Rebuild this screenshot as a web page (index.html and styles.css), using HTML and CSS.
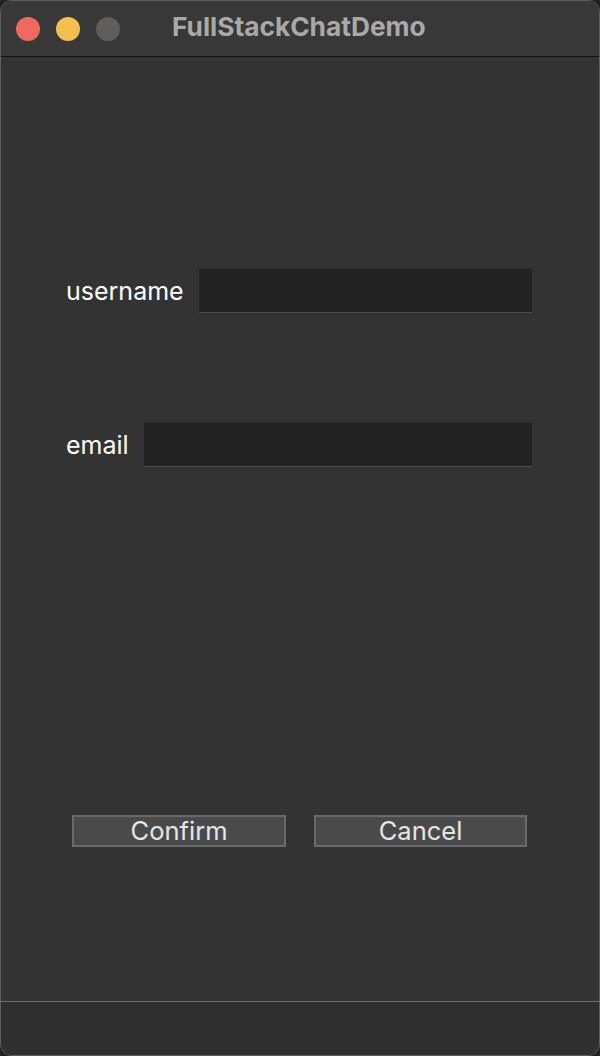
FILE: index.html
```html
<!DOCTYPE html>
<html>
<head>
<meta charset="utf-8">
<link rel="stylesheet" href="styles.css">
</head>
<body>
<div class="window">
  <div class="titlebar">
    <div class="lights">
      <span class="light red"></span>
      <span class="light yellow"></span>
      <span class="light gray"></span>
    </div>
    <div class="title">FullStackChatDemo</div>
  </div>
  <div class="content">
    <div class="form">
      <div class="row">
        <label class="label">username</label>
        <div class="input"></div>
      </div>
      <div class="row row-email">
        <label class="label">email</label>
        <div class="input"></div>
      </div>
    </div>
    <div class="buttons">
      <button class="btn">Confirm</button>
      <button class="btn btn-cancel">Cancel</button>
    </div>
  </div>
  <div class="statusbar"></div>
</div>
</body>
</html>
```
FILE: styles.css
```css
html, body {
  margin: 0;
  padding: 0;
  background: #222222;
}
body {
  width: 600px;
  height: 1056px;
  overflow: hidden;
  font-family: Inter, "Liberation Sans", sans-serif;
}
.window {
  box-sizing: border-box;
  width: 600px;
  height: 1056px;
  border: 1px solid #5e5e5e;
  border-radius: 12px;
  overflow: hidden;
  background: #333333;
  display: flex;
  flex-direction: column;
}
.titlebar {
  height: 55px;
  background: #383838;
  border-bottom: 1px solid #141414;
  display: flex;
  align-items: center;
  flex-shrink: 0;
}
.lights {
  display: flex;
  gap: 16px;
  padding-left: 15px;
}
.light {
  width: 24px;
  height: 24px;
  border-radius: 50%;
  display: block;
}
.red { background: #ee6a5f; }
.yellow { background: #f5bf4f; }
.gray { background: #5f5e5d; }
.title {
  margin-left: 52px;
  margin-bottom: 4px;
  color: #a9a9a9;
  font-weight: 700;
  font-size: 26.3px;
}
.content {
  flex: 1;
  display: flex;
  flex-direction: column;
  padding: 211px 0 0 65px;
}
.form {
  display: flex;
  flex-direction: column;
  gap: 109px;
  width: 466px;
}
.row {
  display: flex;
  align-items: center;
  gap: 15px;
  height: 45px;
}
.label {
  color: #ffffff;
  font-size: 25px;
}
.input {
  flex: 1;
  background: #232323;
  border-top: 1px solid #2c2c2c;
  border-bottom: 1px solid #4e4e4e;
  box-sizing: border-box;
  height: 45px;
}
.buttons {
  display: flex;
  gap: 28px;
  margin-top: 348px;
  padding-left: 6px;
}
.btn {
  width: 214px;
  height: 32px;
  box-sizing: border-box;
  background: #4a4a4a;
  border: 2px solid #6a6a6a;
  color: #e6e6e6;
  font-family: Inter, "Liberation Sans", sans-serif;
  font-size: 25.5px;
  padding: 0;
  line-height: 28px;
}
.btn-cancel {
  width: 213px;
}
.statusbar {
  height: 53px;
  background: #2f2f2f;
  border-top: 1px solid #6f6f6f;
  flex-shrink: 0;
}
```
